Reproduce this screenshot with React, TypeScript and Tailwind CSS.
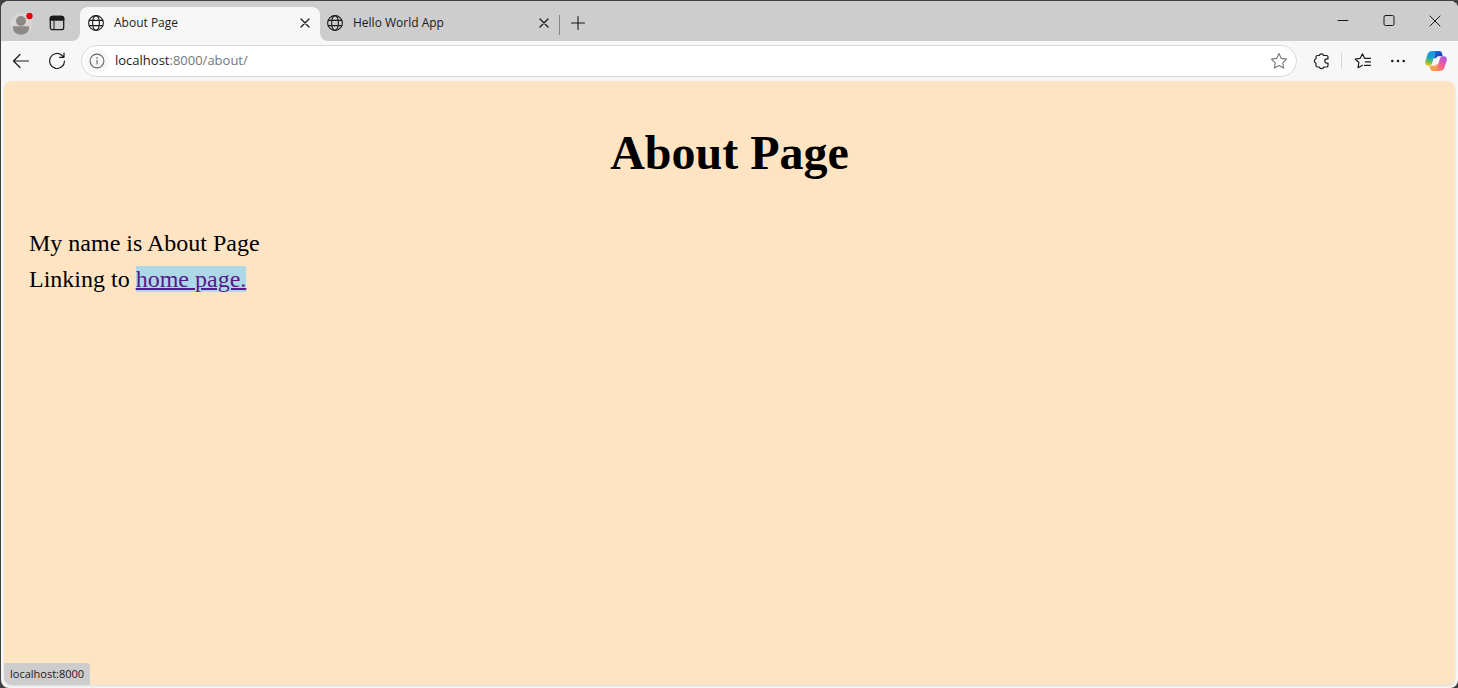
import type { ReactNode } from "react";

const stroke = {
  fill: "none",
  stroke: "currentColor",
  strokeLinecap: "round" as const,
  strokeLinejoin: "round" as const,
};

function Globe() {
  return (
    <svg aria-hidden="true" className="size-4 shrink-0" viewBox="0 0 16 16" {...stroke} strokeWidth="1.1">
      <circle cx="8" cy="8" r="7.4" />
      <ellipse cx="8" cy="8" rx="3.4" ry="7.4" />
      <path d="M1.2 5.4h13.6M1.2 10.6h13.6" />
    </svg>
  );
}

function Cross() {
  return (
    <svg aria-hidden="true" className="size-2.5" viewBox="0 0 10 10" {...stroke} strokeWidth="1.3">
      <path d="M1 1l8 8M9 1l-8 8" />
    </svg>
  );
}

function Profile() {
  return (
    <svg aria-hidden="true" className="h-7 w-6" viewBox="0 0 24 28">
      <circle cx="11" cy="15" r="11" fill="#d8d6d4" />
      <circle cx="11" cy="12" r="5" fill="#8d8986" />
      <path d="M2.800 18.600c0-.8.600-1.300 1.300-1.300h13.800c.7 0 1.300.5 1.300 1.300 0 4.400-3.600 7.200-8.200 7.200s-8.200-2.800-8.200-7.200z" fill="#8d8986" />
      <circle cx="19.500" cy="7" r="3.800" fill="#dadada" />
      <circle cx="19.500" cy="7" r="3.200" fill="#e3000b" />
    </svg>
  );
}

function Workspaces() {
  return (
    <svg aria-hidden="true" className="size-4" viewBox="0 0 16 16" {...stroke} strokeWidth="1.300">
      <rect x="1.300" y="1.300" width="13.400" height="13.400" rx="2.200" />
      <path d="M1.300 5V3.500a2.200 2.200 0 0 1 2.200-2.200h9a2.200 2.200 0 0 1 2.200 2.200V5z" fill="currentColor" />
      <path d="M5 5v9.500" strokeWidth="1" />
    </svg>
  );
}

function Copilot() {
  return (
    <svg aria-hidden="true" className="h-6 w-6" viewBox="0 0 24 24">
      <defs>
        <linearGradient id="cool" x1="0.500" y1="0" x2="0.300" y2="1">
          <stop offset="0" stopColor="#1b8fe8" />
          <stop offset="0.450" stopColor="#18a5c4" />
          <stop offset="0.700" stopColor="#63bd5a" />
          <stop offset="1" stopColor="#f4c51c" />
        </linearGradient>
        <linearGradient id="warm" x1="0.800" y1="0" x2="0.200" y2="1">
          <stop offset="0" stopColor="#a556e8" />
          <stop offset="0.500" stopColor="#ee5b9a" />
          <stop offset="1" stopColor="#ff8b4c" />
        </linearGradient>
        <linearGradient id="deep" x1="0" y1="0" x2="1" y2="1">
          <stop offset="0" stopColor="#1267d8" />
          <stop offset="1" stopColor="#1739b6" />
        </linearGradient>
      </defs>
      <path d="M11 2h4.500c1.300 0 2 .8 2.400 2l.9 3.200h-3.300c-1.500 0-2.300.8-2.800 2.200L10 9z" fill="url(#deep)" />
      <path d="M13 22H8.800c-1.300 0-2-.8-2.400-2l-1-3.200h3.200c1.500 0 2.400-.8 2.900-2.200l2.400.4z" fill="#f6a04f" />
      <path d="M8.500 2h5c-1.200 0-1.900.9-2.300 2.200L8 14.500c-.5 1.500-1.400 2.300-2.900 2.300h-.5c-3 0-4-2.200-3.200-4.800l2.300-7C4.500 3 6 2 8.500 2z" fill="url(#cool)" />
      <path d="M15.500 22h-5c1.200 0 1.900-.9 2.300-2.200L16 9.500c.5-1.500 1.400-2.300 2.900-2.300h.5c3 0 4 2.200 3.200 4.800l-2.300 7c-.8 2-2.300 3-4.800 3z" fill="url(#warm)" />
      <path d="M13 7.500h3L12 16.500H8.700z" fill="#f7f7f7" />
    </svg>
  );
}

function IconButton({ label, className, children }: { label: string; className: string; children: ReactNode }) {
  return (
    <button type="button" aria-label={label} className={`flex h-8 shrink-0 items-center justify-center ${className}`}>
      {children}
    </button>
  );
}

function TabBar() {
  return (
    <header className="flex h-10 items-stretch bg-[#cdcdcd]">
      <div className="flex shrink-0 bg-[linear-gradient(to_top,#f7f7f7_8px,transparent_8px)]">
        <div className="flex w-[79px] shrink-0 items-center rounded-br-lg bg-[#cdcdcd] pt-1 pl-[9px]">
          <IconButton label="Profile" className="w-6"><Profile /></IconButton>
          <IconButton label="Workspaces" className="ml-[15px] w-4"><Workspaces /></IconButton>
        </div>
      </div>
      <div className="mt-1.5 flex w-60 shrink-0 items-center gap-2.5 rounded-t-lg bg-[#f7f7f7] pr-2.5 pb-0.5 pl-2">
        <Globe />
        <span className="grow">About Page</span>
        <button type="button" aria-label="Close About Page"><Cross /></button>
      </div>
      <div className="flex grow bg-[linear-gradient(to_top,#f7f7f7_8px,transparent_8px)]">
        <div className="flex grow rounded-bl-lg bg-[#cdcdcd]">
          <div className="mt-1.5 flex w-[239px] shrink-0 items-center gap-2.5 pr-2.5 pb-0.5 pl-[7px]">
            <Globe />
            <span className="grow">Hello World App</span>
            <button type="button" aria-label="Close Hello World App"><Cross /></button>
          </div>
          <div className="mt-3.5 h-5 w-px shrink-0 bg-[#888888]" />
          <IconButton label="New tab" className="mt-1.5 ml-2.5 w-4">
            <svg aria-hidden="true" className="size-4" viewBox="0 0 16 16" {...stroke} strokeWidth="1.100">
              <path d="M8 1.500v13M1.500 8h13" />
            </svg>
          </IconButton>
          <div className="ml-auto flex items-center">
            <IconButton label="Minimize" className="w-[46px]">
              <svg aria-hidden="true" className="size-3" viewBox="0 0 12 12" {...stroke} strokeWidth="1"><path d="M1 5.500h10" /></svg>
            </IconButton>
            <IconButton label="Maximize" className="w-[46px]">
              <svg aria-hidden="true" className="size-3" viewBox="0 0 12 12" {...stroke} strokeWidth="1"><rect x="1" y="0.500" width="10" height="10" rx="1.500" /></svg>
            </IconButton>
            <IconButton label="Close window" className="w-[46px]">
              <svg aria-hidden="true" className="size-3" viewBox="0 0 12 12" {...stroke} strokeWidth="1"><path d="M1 1l10 10M11 1L1 11" /></svg>
            </IconButton>
          </div>
        </div>
      </div>
    </header>
  );
}

function Toolbar() {
  return (
    <nav aria-label="Browser toolbar" className="flex h-[39px] items-center bg-[#f7f7f7] pr-2.5 pl-2.5">
      <IconButton label="Back" className="w-5">
        <svg aria-hidden="true" className="size-5" viewBox="0 0 20 20" {...stroke} strokeWidth="1.200"><path d="M17.500 10h-15M9 3.500L2.500 10 9 16.500" /></svg>
      </IconButton>
      <IconButton label="Reload" className="ml-4 w-5">
        <svg aria-hidden="true" className="size-5" viewBox="0 0 20 20" {...stroke} strokeWidth="1.200"><path d="M17.500 10a7.500 7.500 0 1 1-3-6l2.500 2.300M17 2v4.300h-4.500" /></svg>
      </IconButton>
      <div className="ml-3.5 flex h-8 min-w-0 grow items-center rounded-full border border-[#d8d8d8] bg-white pr-2 pl-[3px]">
        <button type="button" aria-label="Site information" className="flex size-6 shrink-0 items-center justify-center rounded-full bg-[#f7f7f7] text-[#666666]">
          <svg aria-hidden="true" className="size-4" viewBox="0 0 16 16" {...stroke} strokeWidth="1.100">
            <circle cx="8" cy="8" r="6.900" />
            <path d="M8 7.500v3.500" />
            <circle cx="8" cy="5" r="0.300" fill="currentColor" />
          </svg>
        </button>
        <a href="#about" className="ml-1.5 grow text-[13px] text-[#777777]">
          <span className="text-[#1b1b1b]">localhost</span>:8000/about/
        </a>
        <button type="button" aria-label="Add to favorites" className="text-[#777777]">
          <svg aria-hidden="true" className="size-[18px]" viewBox="0 0 18 18" {...stroke} strokeWidth="1.100">
            <path d="M9 1.500l2.300 4.900 5.300.7-3.900 3.700 1 5.300L9 13.500l-4.700 2.600 1-5.300L1.400 7.100l5.300-.7z" />
          </svg>
        </button>
      </div>
      <IconButton label="Extensions" className="ml-4 w-[18px]">
        <svg aria-hidden="true" className="size-[18px]" viewBox="0 0 18 18" {...stroke} strokeWidth="1.200">
          <path d="M4.500 3.500h1.800a2.300 2.300 0 0 1 4.400 0h2.800A1.500 1.500 0 0 1 15 5v1.800h-1a2.200 2.200 0 0 0 0 4.400h1v2.300a1.500 1.500 0 0 1-1.500 1.500h-2.800a2.300 2.300 0 0 1-4.400 0H4.500A1.500 1.500 0 0 1 3 13.500v-2.300a2.300 2.300 0 0 1 0-4.400V5a1.500 1.500 0 0 1 1.500-1.500z" />
        </svg>
      </IconButton>
      <div className="ml-2.5 h-4 w-px shrink-0 bg-[#d5d5d5]" />
      <IconButton label="Favorites" className="ml-3 w-[18px]">
        <svg aria-hidden="true" className="size-[18px]" viewBox="0 0 18 18" {...stroke} strokeWidth="1.200">
          <path d="M16.500 6.300h-6L8.500 1.800 6.200 6.300l-5 .7 3.700 3.500-.9 5.200 4.500-2.400M11.300 9.800h5.200M10.500 13.300h6" />
        </svg>
      </IconButton>
      <IconButton label="Settings and more" className="ml-[18px] w-4">
        <svg aria-hidden="true" className="size-4" viewBox="0 0 16 16" fill="currentColor"><circle cx="2.300" cy="8" r="1.300" /><circle cx="8" cy="8" r="1.300" /><circle cx="13.700" cy="8" r="1.300" /></svg>
      </IconButton>
      <IconButton label="Copilot" className="ml-[18px] w-6"><Copilot /></IconButton>
    </nav>
  );
}

export default function App() {
  return (
    <div className="flex min-h-screen flex-col bg-[#414042] pt-px pl-px font-['Open_Sans',sans-serif] text-xs text-[#1b1b1b]">
      <div className="flex grow flex-col overflow-hidden rounded-lg bg-[#f7f7f7]">
        <TabBar />
        <Toolbar />
        <div className="flex grow pt-px pr-[3px] pb-[3px] pl-[3px]">
          <main className="relative grow overflow-hidden rounded-lg bg-[#ffe4c4] px-[25px] pt-10 font-['Liberation_Serif',serif] text-2xl leading-9 text-black shadow-sm">
            <h1 className="text-center text-5xl leading-[64px] font-bold">About Page</h1>
            <div className="mt-10">
              <p>My name is About Page</p>
              <p>
                Linking to <a href="#home" className="bg-[#add8e6] text-[#551a8b] underline decoration-2">home page.</a>
              </p>
            </div>
            <div role="status" className="absolute bottom-0 left-0 rounded-tr-sm bg-[#cdcdcd] px-1.5 py-0.5 font-['Open_Sans',sans-serif] text-[11px] leading-[18px] text-[#1b1b1b]">
              localhost:8000
            </div>
          </main>
        </div>
      </div>
    </div>
  );
}
